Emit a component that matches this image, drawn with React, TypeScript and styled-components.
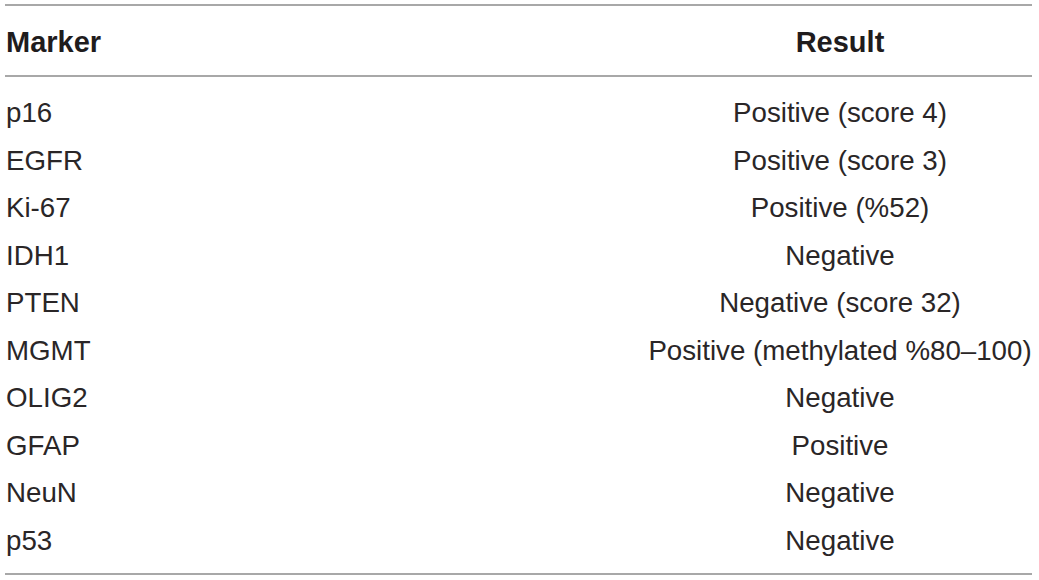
import React from "react";
import styled, { createGlobalStyle } from "styled-components";

const GlobalStyle = createGlobalStyle`
  html, body {
    margin: 0;
    padding: 0;
    background: #ffffff;
  }
  body {
    font-family: "Liberation Sans", Arial, Helvetica, sans-serif;
    color: #2a2627;
  }
`;

const Page = styled.div`
  padding: 4px 7px 0 5px;
  width: 1039px;
  box-sizing: border-box;
`;

const Table = styled.div`
  width: 1027px;
  border-top: 2px solid #a8a8a8;
  border-bottom: 2px solid #a8a8a8;
`;

const Row = styled.div`
  display: grid;
  grid-template-columns: 643px 384px;
  font-size: 27.7px;
  line-height: 47.5px;
`;

const HeaderRow = styled(Row)`
  padding: 12px 0 9px;
  font-size: 29px;
  line-height: 48px;
  font-weight: 700;
  color: #1f1c1d;
  border-bottom: 2px solid #a8a8a8;
`;

const Body = styled.div`
  padding: 12px 0 9px;
`;

const Cell = styled.div<{ $center?: boolean }>`
  padding-left: ${(p) => (p.$center ? "0" : "1px")};
  text-align: ${(p) => (p.$center ? "center" : "left")};
  white-space: nowrap;
`;

const rows: [string, string][] = [
  ["p16", "Positive (score 4)"],
  ["EGFR", "Positive (score 3)"],
  ["Ki-67", "Positive (%52)"],
  ["IDH1", "Negative"],
  ["PTEN", "Negative (score 32)"],
  ["MGMT", "Positive (methylated %80–100)"],
  ["OLIG2", "Negative"],
  ["GFAP", "Positive"],
  ["NeuN", "Negative"],
  ["p53", "Negative"],
];

export default function App() {
  return (
    <>
      <GlobalStyle />
      <Page>
        <Table>
          <HeaderRow>
            <Cell>Marker</Cell>
            <Cell $center>Result</Cell>
          </HeaderRow>
          <Body>
            {rows.map(([m, r]) => (
              <Row key={m}>
                <Cell>{m}</Cell>
                <Cell $center>{r}</Cell>
              </Row>
            ))}
          </Body>
        </Table>
      </Page>
    </>
  );
}
